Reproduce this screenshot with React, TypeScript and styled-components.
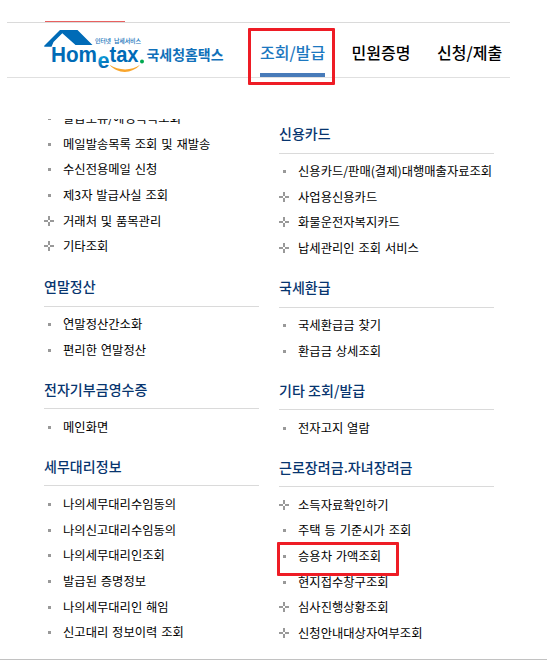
import React from "react";
import styled, { createGlobalStyle } from "styled-components";

const GlobalStyle = createGlobalStyle`
  * { box-sizing: border-box; }
  body {
    margin: 0;
    background: #fff;
    font-family: "Noto Sans CJK KR", sans-serif;
  }
  ul { list-style: none; margin: 0; padding: 0; }
`;

const Page = styled.div`
  width: 547px;
  height: 666px;
  overflow: hidden;
  background: #fff;
`;

const TopRule = styled.div`
  width: 503px;
  margin-left: 7px;
  padding: 21px 0 0 38px;
  border-bottom: 1px solid #dadada;
`;

const TopAccent = styled.div`
  width: 80px;
  height: 1px;
  background: #e8605f;
`;

const Header = styled.header`
  display: flex;
  width: 503px;
  height: 55px;
  margin-left: 7px;
  padding-left: 34px;
  border-bottom: 1px solid #e0e0e0;
`;

const Logo = styled.svg`
  display: block;
  flex: none;
  width: 190px;
  height: 54px;
`;

const Nav = styled.nav`
  display: flex;
  gap: 26.5px;
  margin-left: 29px;
`;

const NavItem = styled.a<{ $active?: boolean }>`
  position: relative;
  width: ${(p) => (p.$active ? 65 : 59)}px;
  height: 54px;
  font-size: 16px;
  line-height: 58px;
  font-weight: 500;
  letter-spacing: 0;
  white-space: nowrap;
  color: ${(p) => (p.$active ? "#1c78c0" : "#000")};
  border-bottom: ${(p) => (p.$active ? "4px solid #487bb9" : "0")};
`;

const Marker = styled.span<{ $x: number; $y: number; $w: number; $h: number }>`
  position: absolute;
  left: ${(p) => p.$x}px;
  top: ${(p) => p.$y}px;
  width: ${(p) => p.$w}px;
  height: ${(p) => p.$h}px;
  border: 3px solid #ee1c25;
  border-radius: 1px;
  pointer-events: none;
`;

const Menu = styled.main`
  display: grid;
  grid-template-columns: 215px 215px;
  column-gap: 20px;
  height: 541px;
  margin-top: 41px;
  padding-left: 44px;
  border-bottom: 1px solid #c2c2c2;
`;

const Column = styled.div<{ $clipped?: boolean }>`
  height: 540px;
  overflow: ${(p) => (p.$clipped ? "hidden" : "visible")};
  margin-top: ${(p) => (p.$clipped ? 0 : -0.9)}px;
`;

const Section = styled.section`
  padding-bottom: 10.9px;
`;

const ScrolledSection = styled(Section)`
  margin-top: -13.2px;
  padding-bottom: 11.6px;
`;

const Title = styled.h2`
  height: 35.4px;
  margin: 0 0 5.1px;
  border-bottom: 1px solid #dadada;
  font-size: 14px;
  font-weight: 500;
  line-height: 31px;
  letter-spacing: 0.05px;
  white-space: nowrap;
  color: #07356f;
`;

const Row = styled.li`
  position: relative;
  display: flex;
  align-items: center;
  height: 25.67px;
  font-size: 12.3px;
  line-height: 25px;
  word-spacing: 1.1px;
  white-space: nowrap;
  color: #000;
`;

const BulletIcon = styled.svg`
  flex: none;
  width: 11px;
  height: 11px;
  margin-right: 8px;
  fill: #999;
`;

type Entry = { text: string; plus?: boolean; marked?: boolean };
type Group = { title?: string; items: Entry[] };

const e = (text: string): Entry => ({ text });
const p = (text: string): Entry => ({ text, plus: true });

const left: Group[] = [
  {
    items: [
      e("발급보류/예정목록조회"),
      e("메일발송목록 조회 및 재발송"),
      e("수신전용메일 신청"),
      e("제3자 발급사실 조회"),
      p("거래처 및 품목관리"),
      p("기타조회"),
    ],
  },
  { title: "연말정산", items: [e("연말정산간소화"), e("편리한 연말정산")] },
  { title: "전자기부금영수증", items: [e("메인화면")] },
  {
    title: "세무대리정보",
    items: [
      e("나의세무대리수임동의"),
      e("나의신고대리수임동의"),
      e("나의세무대리인조회"),
      e("발급된 증명정보"),
      e("나의세무대리인 해임"),
      e("신고대리 정보이력 조회"),
    ],
  },
];

const right: Group[] = [
  {
    title: "신용카드",
    items: [
      e("신용카드/판매(결제)대행매출자료조회"),
      p("사업용신용카드"),
      p("화물운전자복지카드"),
      p("납세관리인 조회 서비스"),
    ],
  },
  { title: "국세환급", items: [e("국세환급금 찾기"), e("환급금 상세조회")] },
  { title: "기타 조회/발급", items: [e("전자고지 열람")] },
  {
    title: "근로장려금.자녀장려금",
    items: [
      p("소득자료확인하기"),
      e("주택 등 기준시가 조회"),
      { text: "승용차 가액조회", marked: true },
      e("현지접수창구조회"),
      p("심사진행상황조회"),
      p("신청안내대상자여부조회"),
    ],
  },
];

function Bullet({ plus }: { plus?: boolean }) {
  return (
    <BulletIcon viewBox="0 0 11 11">
      {plus ? (
        <path d="M4 0h2v4H4zM4 6h2v4H4zM0 4h4v2H0zM6 4h4v2H6z" />
      ) : (
        <rect x="4" y="4" width="3" height="3" />
      )}
    </BulletIcon>
  );
}

function MenuGroup({ group }: { group: Group }) {
  const Wrapper = group.title ? Section : ScrolledSection;
  return (
    <Wrapper>
      {group.title && <Title>{group.title}</Title>}
      <ul>
        {group.items.map((item) => (
          <Row key={item.text}>
            <Bullet plus={item.plus} />
            {item.text}
            {item.marked && <Marker $x={-2} $y={-2} $w={122} $h={34} />}
          </Row>
        ))}
      </ul>
    </Wrapper>
  );
}

function HometaxLogo() {
  return (
    <Logo viewBox="41 23 190 54" role="img" aria-label="Hometax 국세청홈택스">
      <defs>
        <linearGradient id="letterE" x1="0" y1="0" x2="0.3" y2="1">
          <stop offset="0.25" stopColor="#16b5e8" />
          <stop offset="0.85" stopColor="#0069b5" />
        </linearGradient>
      </defs>
      <path fill="#006bb7" d="M44 46 60 30h17.5L92.5 45H75.5L62.3 33.2 53.5 42l-2 4.8h-7z" />
      <g fontFamily="Liberation Sans, sans-serif" fontWeight="700" fill="#006bb7">
        <text x="51" y="62" fontSize="22" textLength="46" lengthAdjust="spacingAndGlyphs">Hom</text>
        <text x="97.5" y="67.5" fontSize="22" textLength="12" lengthAdjust="spacingAndGlyphs" fill="url(#letterE)">e</text>
        <text x="109.5" y="62" fontSize="22" textLength="29" lengthAdjust="spacingAndGlyphs">tax</text>
      </g>
      <circle cx="142" cy="61.5" r="2" fill="#00a950" />
      <path fill="#f9a52b" d="M109.5 64.8C117 74 132 74.5 140 64.8 132 70.8 119 71.2 109.5 64.8z" />
      <g fontFamily="Noto Sans CJK KR, sans-serif" fontWeight="700" fill="#1170b9">
        <text x="95" y="43" fontSize="6" fontWeight="500" textLength="16">인터넷</text>
        <text x="114" y="43" fontSize="6" fontWeight="500" textLength="27">납세서비스</text>
        <text x="146.5" y="60.2" fontSize="14" textLength="77" lengthAdjust="spacingAndGlyphs">국세청홈택스</text>
      </g>
    </Logo>
  );
}

export default function App() {
  return (
    <Page>
      <GlobalStyle />
      <TopRule>
        <TopAccent />
      </TopRule>
      <Header>
        <HometaxLogo />
        <Nav>
          <NavItem $active>
            조회/발급
            <Marker $x={-12} $y={5} $w={87} $h={57} />
          </NavItem>
          <NavItem>민원증명</NavItem>
          <NavItem>신청/제출</NavItem>
        </Nav>
      </Header>
      <Menu>
        <Column $clipped>
          {left.map((g, i) => (
            <MenuGroup key={i} group={g} />
          ))}
        </Column>
        <Column>
          {right.map((g, i) => (
            <MenuGroup key={i} group={g} />
          ))}
        </Column>
      </Menu>
    </Page>
  );
}
